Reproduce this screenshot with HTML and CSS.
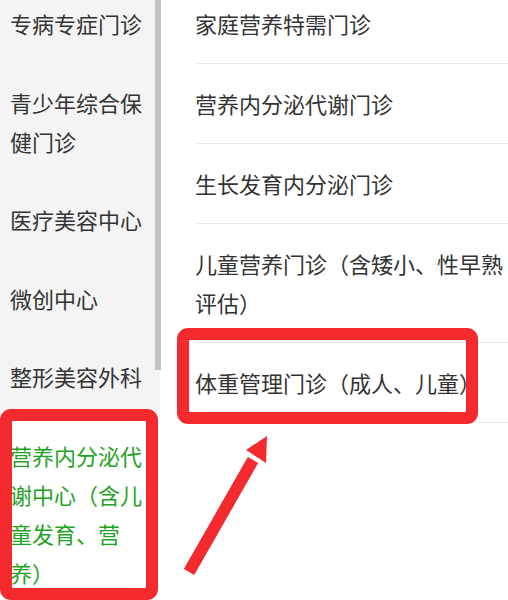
FILE: index.html
```html
<!DOCTYPE html>
<html lang="zh-CN">
<head>
<meta charset="utf-8">
<title>科室选择</title>
<link rel="stylesheet" href="styles.css">
</head>
<body>
<div class="page">
  <nav class="sidebar">
    <ul class="dept-list">
      <li class="dept">专病专症门诊</li>
      <li class="dept">青少年综合保健门诊</li>
      <li class="dept">医疗美容中心</li>
      <li class="dept">微创中心</li>
      <li class="dept">整形美容外科</li>
      <li class="dept dept-active">营养内分泌代谢中心（含儿童发育、营养）</li>
    </ul>
    <div class="scrollbar"></div>
  </nav>
  <main class="clinics">
    <ul class="clinic-list">
      <li class="clinic">家庭营养特需门诊</li>
      <li class="clinic">营养内分泌代谢门诊</li>
      <li class="clinic">生长发育内分泌门诊</li>
      <li class="clinic">儿童营养门诊（含矮小、性早熟评估）</li>
      <li class="clinic">体重管理门诊（成人、儿童）</li>
    </ul>
  </main>
  <svg class="annotations" width="508" height="600" viewBox="0 0 508 600" aria-hidden="true">
    <rect x="183" y="334" width="289" height="84" rx="5" fill="none" stroke="#f42a2f" stroke-width="12"/>
    <rect x="6" y="415" width="146" height="179" rx="5" fill="none" stroke="#f42a2f" stroke-width="12"/>
    <line x1="189" y1="572" x2="253" y2="460" stroke="#f42a2f" stroke-width="12"/>
    <polygon points="267,436 246,450 266,463" fill="#f42a2f"/>
  </svg>
</div>
</body>
</html>
```

FILE: styles.css
```css
* {
  box-sizing: border-box;
}

html, body {
  margin: 0;
  padding: 0;
  background: #ffffff;
}

body {
  font-family: "Noto Sans CJK SC", "Noto Sans", sans-serif;
  font-size: 22px;
  color: #333333;
  overflow: hidden;
}

.page {
  position: relative;
  display: flex;
  width: 508px;
  height: 600px;
  overflow: hidden;
}

.sidebar {
  position: relative;
  flex: 0 0 160px;
  background: #f4f4f4;
}

.dept-list,
.clinic-list {
  list-style: none;
  margin: -16px 0 0;
  padding: 0;
}

.dept {
  padding: 20px 10px 19.5px 10px;
  line-height: 39px;
}

.dept-active {
  background: #ffffff;
  color: #1fa324;
}

.scrollbar {
  position: absolute;
  top: 0;
  left: 155px;
  width: 6px;
  height: 370px;
  background: #c2c2c2;
}

.clinics {
  flex: 1;
  padding-left: 35px;
}

.clinic {
  padding: 20px 0;
  line-height: 39px;
  border-bottom: 1px solid #e9e9e9;
}

.annotations {
  position: absolute;
  top: 0;
  left: 0;
  pointer-events: none;
}
```
